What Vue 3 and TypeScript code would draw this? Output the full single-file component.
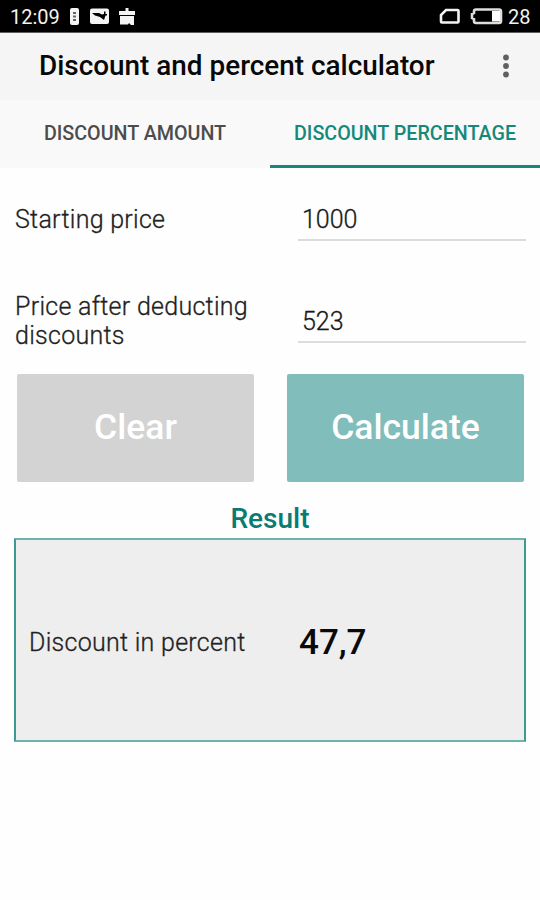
<script setup lang="ts">
import { ref } from 'vue'

type Tab = 'amount' | 'percentage'

const activeTab = ref<Tab>('percentage')
const startingPrice = ref('1000')
const finalPrice = ref('523')
const result = ref('47,7')

function clearAll(): void {
  startingPrice.value = ''
  finalPrice.value = ''
  result.value = ''
}

function calculate(): void {
  const start = Number(startingPrice.value)
  const end = Number(finalPrice.value)
  result.value = start > 0 ? (((start - end) / start) * 100).toFixed(1).replace('.', ',') : ''
}
</script>

<template>
  <div class="screen">
    <div class="status">
      <span class="clock">12:09</span>
      <svg class="status-left" width="68" height="18" viewBox="0 0 68 18" fill="#f4f4f4">
        <path d="M3 0h5q2 0 2 2v13q0 2-2 2H3q-2 0-2-2V2q0-2 2-2z" />
        <path d="M4 4h3v2H4zM4 7.500h3v2H4zM4 11h3v2H4z" fill="#666" />
        <path d="M23 .5h15q2 0 2 2v11.500q0 2-2 2H23q-2 0-2-2V2.500q0-2 2-2z" />
        <path d="M23 5h7l3 1.500 2-.5V3.500h1.500V6H38v1.500h-1.500L35 12l-4-3-5-1.500z" fill="#000" />
        <path d="M56.500 0h3v3H66v4H50V3h6.500zM51 8h14v9h-3l-2-2-1 1.500h-8z" />
      </svg>
      <svg class="status-right" width="64" height="18" viewBox="0 0 64 18">
        <path d="M7 2h11.500q1 0 1 1v10.500q0 1-1 1H3q-1 0-1-1V7z" fill="none" stroke="#f2f2f2" stroke-width="2.600" />
        <path d="M37 1.500h23q2 0 2 2v9.500q0 2-2 2H37q-2 0-2-2v-2l-2-1V6l2-1V3.500q0-2 2-2z" fill="none" stroke="#dedede" stroke-width="2.600" />
        <path d="M53 3h8v10.500h-8z" fill="#fff" />
      </svg>
      <span class="battery">28</span>
    </div>

    <header class="appbar">
      <h1 class="title">Discount and percent calculator</h1>
      <svg class="more" width="8" height="24" viewBox="0 0 8 24" fill="#606060">
        <circle cx="4" cy="3.500" r="2.900" />
        <circle cx="4" cy="12" r="2.900" />
        <circle cx="4" cy="20.500" r="2.900" />
      </svg>
    </header>

    <nav class="tabs">
      <button class="tab amount" :class="{ active: activeTab === 'amount' }" @click="activeTab = 'amount'">DISCOUNT AMOUNT</button>
      <button class="tab percentage" :class="{ active: activeTab === 'percentage' }" @click="activeTab = 'percentage'">DISCOUNT PERCENTAGE</button>
    </nav>

    <main class="content">
      <label class="row">
        <span class="label">Starting price</span>
        <input v-model="startingPrice" class="field" type="text" />
      </label>
      <label class="row">
        <span class="label">Price after deducting discounts</span>
        <input v-model="finalPrice" class="field" type="text" />
      </label>

      <div class="actions">
        <button class="btn clear" @click="clearAll">Clear</button>
        <button class="btn calc" @click="calculate">Calculate</button>
      </div>

      <h2 class="heading">Result</h2>
      <section class="result">
        <span class="label">Discount in percent</span>
        <strong class="value">{{ result }}</strong>
      </section>
    </main>
  </div>
</template>

<style>
body {
  margin: 0;
  background: #fefefe;
}
</style>

<style scoped>
.screen {
  width: 540px;
  height: 900px;
  overflow: hidden;
  background: #fefefe;
  color: #080808;
  font-family: Roboto, "Liberation Sans", sans-serif;
}
button {
  border: 0;
  padding: 0;
  font-family: inherit;
}
.status {
  box-sizing: border-box;
  display: flex;
  align-items: center;
  height: 33px;
  padding: 1px 10px 0;
  background: #000;
  border-bottom: 1px solid #5c5c5c;
  color: #f2f2f2;
  font-size: 20px;
}
.clock {
  width: 59px;
}
.status-right {
  margin-left: auto;
  margin-right: 5px;
}
.battery {
  width: 22px;
}
.appbar {
  box-sizing: border-box;
  display: flex;
  align-items: center;
  justify-content: space-between;
  height: 67px;
  padding: 0 30px 2px 39px;
  background: #f5f5f5;
}
.title {
  margin: 0;
  font-size: 27.9px;
  font-weight: 500;
  line-height: 32px;
  white-space: nowrap;
}
.tabs {
  display: grid;
  grid-template-columns: 1fr 1fr;
  height: 68px;
  background: #f9f9f9;
}
.tab {
  box-sizing: border-box;
  padding-top: 2px;
  border-bottom: 3px solid transparent;
  background: none;
  color: #4c4c4c;
  font-size: 19.7px;
  font-weight: 500;
  white-space: nowrap;
}
.tab.active {
  border-color: #14897b;
  color: #14897b;
}
.content {
  padding: 0 14px;
}
.row {
  display: grid;
  grid-template-columns: 284px 228px;
  align-items: center;
  height: 102px;
}
.label {
  color: #222;
  font-size: 25px;
  font-weight: 300;
  letter-spacing: 0.28px;
  line-height: 29px;
  -webkit-text-stroke: 0.3px #222;
}
.row .label {
  width: 250px;
  padding-left: 1px;
}
.field {
  box-sizing: border-box;
  width: 228px;
  height: 44px;
  padding: 2px 4px 0;
  border: 0;
  border-bottom: 2px solid #dcdcdc;
  outline: 0;
  background: none;
  color: #181818;
  font: 300 25px Roboto, "Liberation Sans", sans-serif;
  -webkit-text-stroke: 0.3px #181818;
}
.actions {
  display: grid;
  grid-template-columns: 237px 237px;
  column-gap: 33px;
  padding: 2px 0 0 3px;
}
.btn {
  height: 108px;
  padding-bottom: 2px;
  border-radius: 2px;
  color: #fff;
  font-size: 35.5px;
  font-weight: 500;
}
.clear {
  background: #d3d3d3;
}
.calc {
  background: #80bdbb;
}
.heading {
  margin: 20px 0 3px;
  color: #087c72;
  font-size: 28px;
  font-weight: 500;
  line-height: 33px;
  text-align: center;
}
.result {
  box-sizing: border-box;
  display: grid;
  grid-template-columns: 270px 1fr;
  align-items: center;
  width: 512px;
  height: 204px;
  padding: 5px 0 0 13px;
  border: 2px solid;
  border-color: #6fb3ad #3d9a92;
  border-radius: 1px;
  background: #eee;
}
.value {
  color: #0a0a0a;
  font-size: 35px;
  font-weight: 500;
}
</style>
